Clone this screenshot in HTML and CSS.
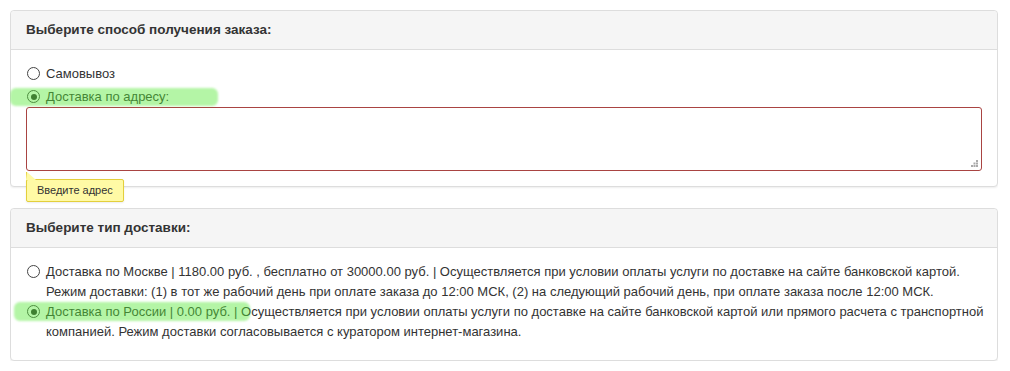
FILE: index.html
```html
<!DOCTYPE html>
<html lang="ru">
<head>
  <meta charset="UTF-8" />
  <title>Оформление заказа</title>
  <link rel="stylesheet" href="styles.css">
</head>
<body>
  <div class="panel">
    <div class="panel-heading">Выберите способ получения заказа:</div>
    <div class="panel-body">
      <label class="radio first">
        <span class="dot"></span>
        <span>Самовывоз</span>
      </label>
      <label class="radio marked mark-address">
        <span class="dot checked"></span>
        <span>Доставка по адресу:</span>
      </label>
      <div class="address">
        <textarea class="address-input"></textarea>
        <svg class="grip" width="7" height="7" viewBox="0 0 7 7">
          <rect x="5" y="0" width="2" height="2" fill="#aaa"/>
          <rect x="2.5" y="2.5" width="2" height="2" fill="#aaa"/>
          <rect x="5" y="2.5" width="2" height="2" fill="#aaa"/>
          <rect x="0" y="5" width="2" height="2" fill="#aaa"/>
          <rect x="2.5" y="5" width="2" height="2" fill="#aaa"/>
          <rect x="5" y="5" width="2" height="2" fill="#aaa"/>
        </svg>
        <div class="hint">Введите адрес</div>
      </div>
    </div>
  </div>

  <div class="panel">
    <div class="panel-heading">Выберите тип доставки:</div>
    <div class="panel-body delivery">
      <label class="radio">
        <span class="dot"></span>
        <span>Доставка по Москве | 1180.00 руб. , бесплатно от 30000.00 руб. | Осуществляется при условии оплаты услуги по доставке на сайте банковской картой. Режим доставки: (1) в тот же рабочий день при оплате заказа до 12:00 МСК, (2) на следующий рабочий день, при оплате заказа после 12:00 МСК.</span>
      </label>
      <label class="radio marked mark-russia">
        <span class="dot checked"></span>
        <span>Доставка по России | 0.00 руб. | Осуществляется при условии оплаты услуги по доставке на сайте банковской картой или прямого расчета с транспортной компанией. Режим доставки согласовывается с куратором интернет-магазина.</span>
      </label>
    </div>
  </div>
</body>
</html>
```

FILE: styles.css
```css
body {
  margin: 10px 12px 0 10px;
  font-family: 'Liberation Sans', Arial, sans-serif;
  font-size: 13px;
  line-height: 20px;
  color: #333;
  background: #fff;
}
.panel {
  border: 1px solid #ddd;
  border-radius: 4px;
  box-shadow: 0 1px 2px rgba(0,0,0,0.07);
  margin-bottom: 21px;
  background: #fff;
}
.panel:last-child {
  margin-bottom: 0;
}
.panel-heading {
  background: #f5f5f5;
  border-bottom: 1px solid #ddd;
  border-radius: 4px 4px 0 0;
  padding: 9px 15px;
  font-size: 13.5px;
  font-weight: bold;
}
.panel-body {
  padding: 14px 15px 15px;
}
.delivery {
  padding: 14px 8px 18px 15px;
}
.radio {
  display: flex;
  gap: 6px;
  position: relative;
  padding-left: 1px;
}
.radio.first {
  margin-bottom: 3px;
}
.dot {
  flex: none;
  width: 11px;
  height: 11px;
  margin-top: 3px;
  border: 1px solid #444;
  border-radius: 50%;
  background: #fff;
  position: relative;
}
.dot.checked::after {
  content: '';
  position: absolute;
  left: 2.5px;
  top: 2.5px;
  width: 6px;
  height: 6px;
  border-radius: 50%;
  background: #2b2b2b;
}
.marked::before {
  content: '';
  position: absolute;
  background: rgba(88, 233, 57, 0.45);
  border-radius: 6px;
  filter: blur(1.2px);
  z-index: 1;
  pointer-events: none;
}
.mark-address::before {
  left: -16px;
  top: 1px;
  width: 208px;
  height: 18px;
}
.mark-russia::before {
  left: -12px;
  top: 0;
  width: 236px;
  height: 19px;
}
.address {
  position: relative;
}
.address-input {
  display: block;
  width: 100%;
  height: 64px;
  box-sizing: border-box;
  border: 1px solid #a94442;
  border-radius: 3px;
  resize: none;
  font: inherit;
  padding: 6px 12px;
  margin: 0;
}
.grip {
  position: absolute;
  right: 4px;
  bottom: 4px;
}
.hint {
  position: absolute;
  left: 0;
  top: 72px;
  background: #fffaa5;
  border: 1px solid #e3cf3c;
  border-radius: 2px;
  font-size: 11px;
  line-height: 21px;
  padding: 0 10px;
  color: #333;
  box-shadow: 0 1px 2px rgba(0,0,0,0.08);
}
.hint::before {
  content: '';
  position: absolute;
  left: -1px;
  top: -8px;
  border-left: 1px solid #e3cf3c;
  width: 0;
  height: 0;
  border-right: 9px solid transparent;
  border-bottom: 8px solid #fffaa5;
}
```
